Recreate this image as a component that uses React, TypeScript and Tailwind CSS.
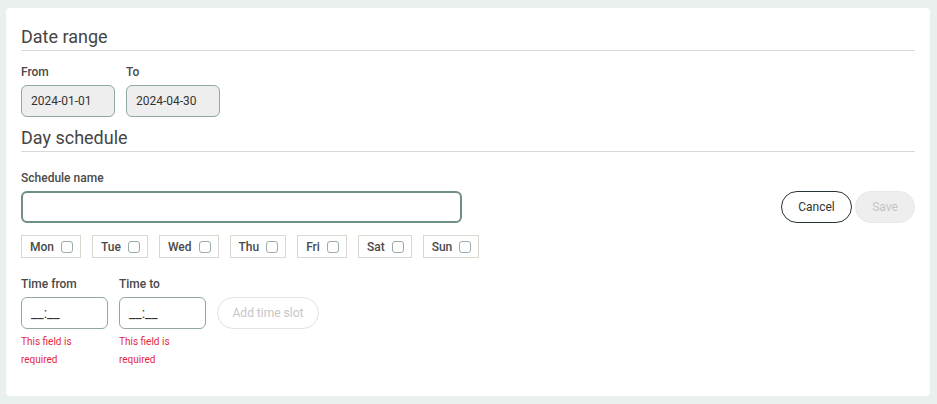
import React from 'react';

const days = ['Mon', 'Tue', 'Wed', 'Thu', 'Fri', 'Sat', 'Sun'];

function SectionTitle({ children }: { children: React.ReactNode }) {
  return (
    <h2 className="text-[18px] leading-[24px] text-[#454545] border-b border-[#d9d9d9] pb-px">
      {children}
    </h2>
  );
}

function Label({ children }: { children: React.ReactNode }) {
  return <div className="text-[12px] leading-[16px] font-medium text-[#4a4a4a]">{children}</div>;
}

export default function App() {
  return (
    <div className="min-h-screen bg-[#eaf0ee] pt-2 pl-[6px] pr-[7px] pb-2" style={{ fontFamily: 'Roboto, "Liberation Sans", sans-serif' }}>
      <div className="bg-white rounded-[4px] h-[388px] px-[15px] pt-[17px]">
        <SectionTitle>Date range</SectionTitle>

        {/* Date range inputs */}
        <div className="flex gap-[11px] mt-[13px]">
          <div className="flex flex-col gap-[5px]">
            <Label>From</Label>
            <div className="w-[94px] h-[32px] rounded-[6px] border border-[#8fa8a0] bg-[#eeeeee] px-[9px] flex items-center text-[12px] text-[#333]">
              2024-01-01
            </div>
          </div>
          <div className="flex flex-col gap-[5px]">
            <Label>To</Label>
            <div className="w-[94px] h-[32px] rounded-[6px] border border-[#8fa8a0] bg-[#eeeeee] px-[9px] flex items-center text-[12px] text-[#333]">
              2024-04-30
            </div>
          </div>
        </div>

        <div className="mt-[9px]">
          <SectionTitle>Day schedule</SectionTitle>
        </div>

        {/* Schedule name + actions */}
        <div className="flex justify-between items-end mt-[18px]">
          <div className="flex flex-col gap-[5px]">
            <Label>Schedule name</Label>
            <input className="w-[441px] h-[32px] rounded-[6px] border-2 border-[#6d8f88] bg-white px-2 text-[12px] outline-none" />
          </div>
          <div className="flex gap-[3px]">
            <button className="w-[71px] h-[32px] rounded-full border border-[#263238] text-[12px] text-[#333] bg-white">
              Cancel
            </button>
            <button className="w-[60px] h-[32px] rounded-full border border-[#e8e8e8] bg-[#eeeeee] text-[12px] text-[#c4c4c4]">
              Save
            </button>
          </div>
        </div>

        {/* Days */}
        <div className="flex gap-[11px] mt-[12px]">
          {days.map((d) => (
            <label key={d} className="h-[23px] flex items-center gap-[7px] pl-[8px] pr-[7px] border border-[#d9d9cf] text-[12px] font-medium text-[#4a4a4a]">
              {d}
              <span className="w-[12px] h-[12px] rounded-[3px] border border-[#9aaca6] bg-white" />
            </label>
          ))}
        </div>

        {/* Time slot */}
        <div className="flex gap-[11px] mt-[18px]">
          {['Time from', 'Time to'].map((t) => (
            <div key={t} className="flex flex-col">
              <Label>{t}</Label>
              <div className="mt-[5px] w-[87px] h-[32px] rounded-[6px] border border-[#8fa8a0] bg-white px-[9px] flex items-center text-[14px] text-[#333]">
                __:__
              </div>
              <div className="mt-[4px] text-[10px] leading-[18px] text-[#e5283f] w-[87px]">
                This field is
                <br />
                required
              </div>
            </div>
          ))}
          <div className="pt-[21px]">
            <button className="w-[102px] h-[32px] rounded-full border border-[#e2e2e2] bg-white text-[12px] text-[#c6c6c6]">
              Add time slot
            </button>
          </div>
        </div>
      </div>
    </div>
  );
}
